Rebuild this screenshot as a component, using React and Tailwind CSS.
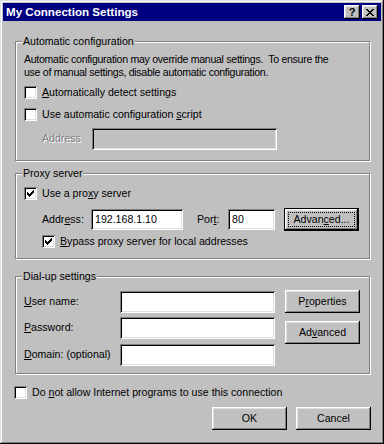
import React from 'react';

// win95 bevels
const sunken =
  'shadow-[inset_1px_1px_0_#808080,inset_-1px_-1px_0_#fff,inset_2px_2px_0_#000,inset_-2px_-2px_0_#dfdfdf]';
const raised =
  'shadow-[inset_-1px_-1px_0_#000,inset_1px_1px_0_#fff,inset_-2px_-2px_0_#808080,inset_2px_2px_0_#dfdfdf]';

function Check({ checked }) {
  return (
    <span className={`flex items-center justify-center w-[13px] h-[13px] shrink-0 bg-white ${sunken}`}>
      {checked && (
        <svg width="7" height="7" viewBox="0 0 7 7" shapeRendering="crispEdges">
          <rect x="6" y="0" width="1" height="1" />
          <rect x="5" y="1" width="2" height="1" />
          <rect x="0" y="2" width="1" height="1" />
          <rect x="4" y="2" width="3" height="1" />
          <rect x="0" y="3" width="2" height="1" />
          <rect x="3" y="3" width="3" height="1" />
          <rect x="0" y="4" width="5" height="1" />
          <rect x="1" y="5" width="3" height="1" />
          <rect x="2" y="6" width="1" height="1" />
        </svg>
      )}
    </span>
  );
}

function CheckRow({ checked, className = '', children }) {
  return (
    <div className={`flex items-center h-[13px] ${className}`}>
      <Check checked={checked} />
      <span className="ml-[5px] leading-[13px] whitespace-nowrap">{children}</span>
    </div>
  );
}

function Field({ value = '', disabled, className = '' }) {
  return (
    <div
      className={`flex items-center pl-[4px] ${disabled ? 'bg-[#c0c0c0]' : 'bg-white'} ${sunken} ${className}`}
    >
      {value}
    </div>
  );
}

function Button({ children, className = '', isDefault }) {
  if (isDefault) {
    return (
      <div className={`border border-black ${className}`}>
        <div className={`h-full flex items-center justify-center p-[3px] ${raised}`}>
          <div className="w-full h-full flex items-center justify-center border border-dotted border-black">
            {children}
          </div>
        </div>
      </div>
    );
  }
  return (
    <div className={`flex items-center justify-center ${raised} ${className}`}>{children}</div>
  );
}

function Group({ title, className = '', children }) {
  return (
    <div
      className={`relative mx-[11px] ml-[12px] border border-[#808080] shadow-[inset_1px_1px_0_#fff,1px_1px_0_#fff] ${className}`}
    >
      <span className="absolute left-[6px] top-[-7px] px-[1px] bg-[#c0c0c0] leading-[13px]">{title}</span>
      {children}
    </div>
  );
}

export default function App() {
  return (
    <div
      className="w-[384px] h-[444px] p-[3px] flex flex-col bg-[#c0c0c0] text-[10.6px] text-black shadow-[inset_-1px_-1px_0_#000,inset_1px_1px_0_#dfdfdf,inset_-2px_-2px_0_#808080,inset_2px_2px_0_#fff]"
      style={{ fontFamily: '"Liberation Sans", Arial, sans-serif' }}
    >
      {/* title bar */}
      <div className="h-[18px] flex items-center bg-[#000080] pl-[3px] pr-[3px]">
        <span className="text-white font-bold text-[11.6px] leading-[18px]">My Connection Settings</span>
        <div className="ml-auto flex gap-[2px]">
          <div
            className={`w-[16px] h-[14px] flex items-center justify-center bg-[#c0c0c0] font-bold text-[11px] leading-none ${raised}`}
          >
            ?
          </div>
          <div className={`w-[16px] h-[14px] flex items-center justify-center bg-[#c0c0c0] ${raised}`}>
            <svg width="8" height="7" viewBox="0 0 8 7" shapeRendering="crispEdges">
              <path d="M0 0h2v1h-2zM6 0h2v1h-2zM1 1h2v1h-2zM5 1h2v1h-2zM2 2h4v1h-4zM3 3h2v1h-2zM2 4h4v1h-4zM1 5h2v1h-2zM5 5h2v1h-2zM0 6h2v1h-2zM6 6h2v1h-2z" />
            </svg>
          </div>
        </div>
      </div>

      {/* Automatic configuration */}
      <Group title="Automatic configuration" className="mt-[20px] h-[120px] pt-[11px] px-[8px]">
        <p className="leading-[13px] whitespace-nowrap tracking-[-0.3px]">
          Automatic configuration may override manual settings.&nbsp; To ensure the
          <br />
          use of manual settings, disable automatic configuration.
        </p>
        <CheckRow className="mt-[7px]">
          <u>A</u>utomatically detect settings
        </CheckRow>
        <CheckRow className="mt-[9px]">
          Use automatic configuration <u>s</u>cript
        </CheckRow>
        <div className="mt-[7px] ml-[18px] flex items-center h-[22px]">
          <span className="w-[50px] text-[#808080] [text-shadow:1px_1px_0_#fff]">Address</span>
          <Field disabled className="w-[185px] h-[22px]" />
        </div>
      </Group>

      {/* Proxy server */}
      <Group title="Proxy server" className="mt-[12px] h-[86px] pt-[13px] px-[8px]">
        <CheckRow checked>
          Use a pro<u>x</u>y server
        </CheckRow>
        <div className="mt-[8px] ml-[18px] flex items-center h-[23px]">
          <span className="w-[49px]">
            Addr<u>e</u>ss:
          </span>
          <Field value="192.168.1.10" className="w-[92px] h-[21px]" />
          <span className="ml-[14px] w-[31px]">
            Por<u>t</u>:
          </span>
          <Field value="80" className="w-[47px] h-[21px]" />
          <Button isDefault className="ml-[9px] w-[75px] h-[23px]">
            Advan<u>c</u>ed...
          </Button>
        </div>
        <CheckRow checked className="mt-[4px] ml-[18px]">
          <u>B</u>ypass proxy server for local addresses
        </CheckRow>
      </Group>

      {/* Dial-up settings */}
      <Group title="Dial-up settings" className="mt-[17px] h-[98px] pt-[13px] px-[8px] flex">
        <div className="flex flex-col">
          <div className="flex items-center mt-[1px]">
            <span className="w-[96px]">
              <u>U</u>ser name:
            </span>
            <Field className="w-[155px] h-[22px]" />
          </div>
          <div className="flex items-center mt-[4px]">
            <span className="w-[96px]">
              <u>P</u>assword:
            </span>
            <Field className="w-[155px] h-[22px]" />
          </div>
          <div className="flex items-center mt-[5px]">
            <span className="w-[96px]">
              <u>D</u>omain: (optional)
            </span>
            <Field className="w-[155px] h-[22px]" />
          </div>
        </div>
        <div className="ml-[10px] flex flex-col">
          <Button className="w-[75px] h-[23px]">
            P<u>r</u>operties
          </Button>
          <Button className="mt-[8px] w-[75px] h-[23px]">
            Ad<u>v</u>anced
          </Button>
        </div>
      </Group>

      <CheckRow className="mt-[12px] ml-[11px]">
        Do <u>n</u>ot allow Internet programs to use this connection
      </CheckRow>

      <div className="mt-[8px] pr-[10px] flex justify-end gap-[9px]">
        <Button className="w-[75px] h-[23px]">OK</Button>
        <Button className="w-[75px] h-[23px]">Cancel</Button>
      </div>
    </div>
  );
}
